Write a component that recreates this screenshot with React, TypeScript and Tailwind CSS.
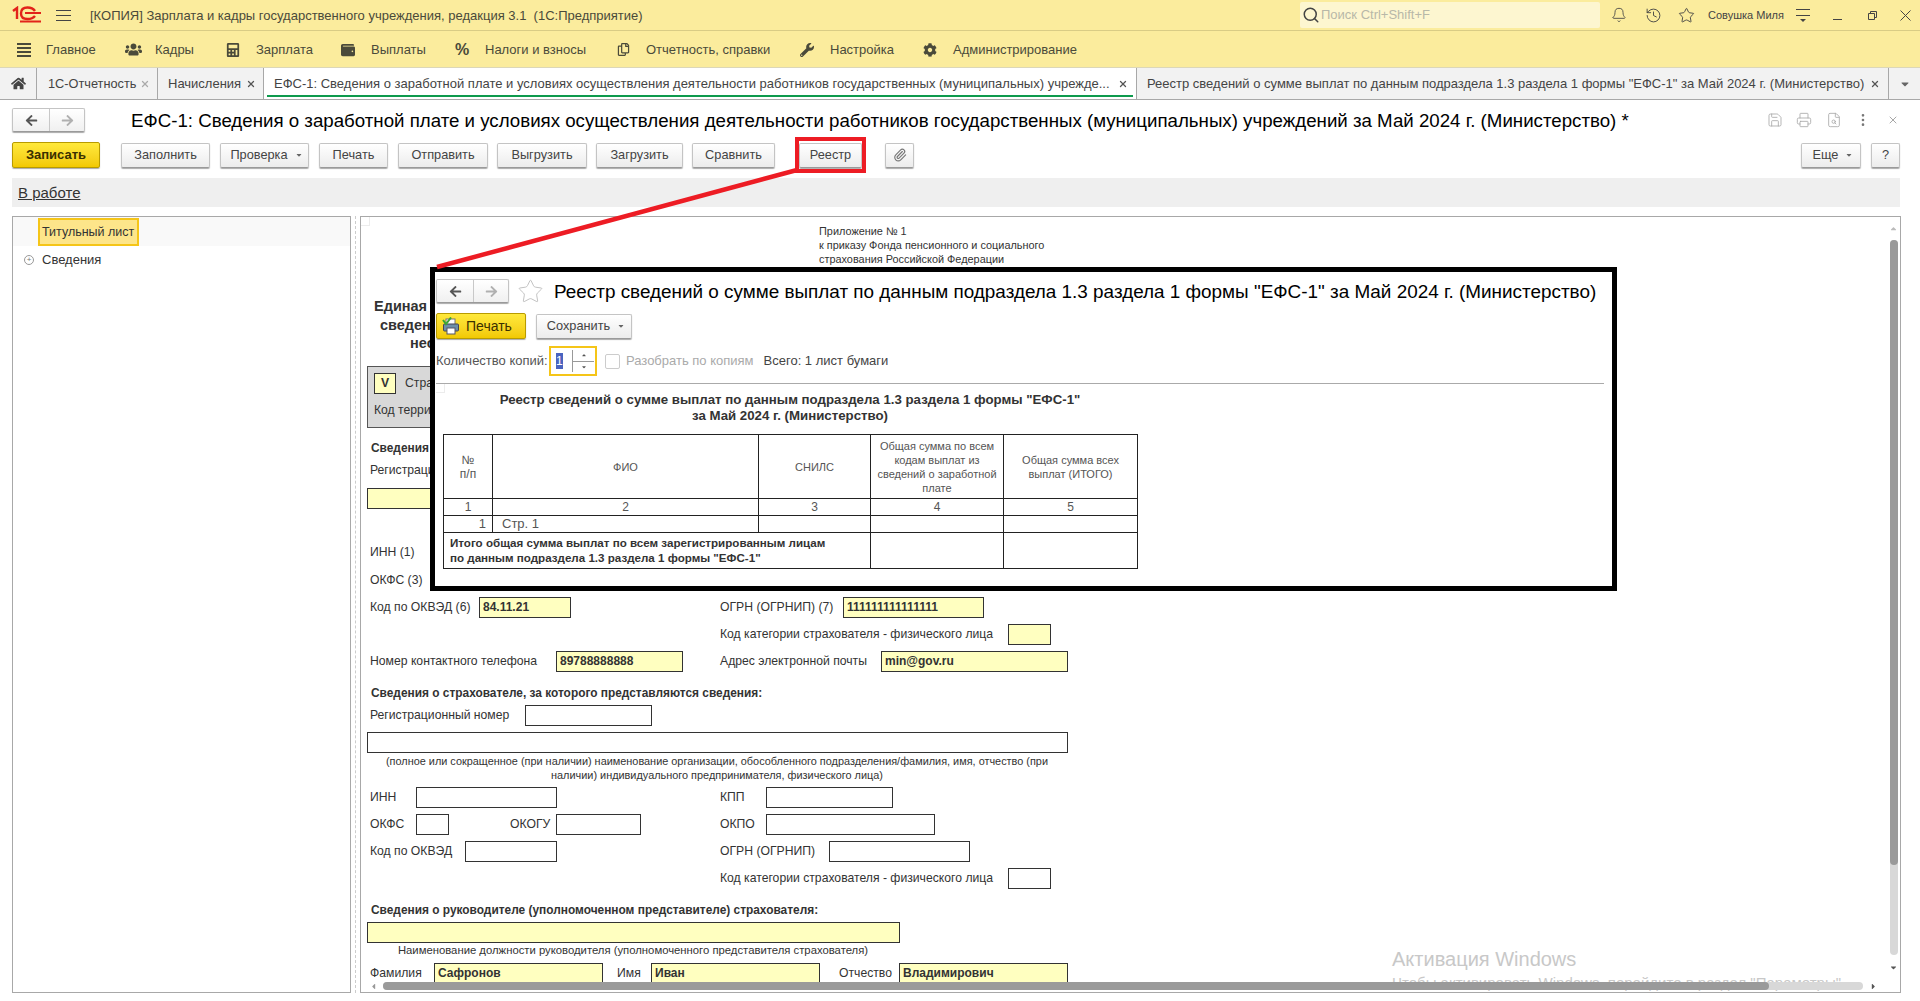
import { ReactNode } from 'react';
import { FaHome, FaUsers, FaCalculator, FaWrench, FaCog, FaArrowLeft, FaArrowRight, FaCaretDown, FaCaretUp, FaCaretLeft, FaCaretRight, FaWallet, FaRegCopy } from 'react-icons/fa';
import { Bell, History, Star, Search, Paperclip, X, Save, Printer, FileSearch, EllipsisVertical } from 'lucide-react';

// ============================================================================
// 1C - ЕФС-1 FORM WITH REGISTRY OVERLAY
// ============================================================================

function Logo() {
    return (
        <svg width="32" height="18" viewBox="0 0 32 18" fill="none" stroke="#e2231a" strokeWidth="2.4">
            <path d="M2 5 L6 2 V13" />
            <path d="M24 5 C22 2 19 1.5 16.5 1.5 C12 1.5 10 4 10 7.5 C10 11 12 13 16.5 13 C19 13 22 12.5 24 10" />
            <path d="M14 7 H30 M9 15.5 H30" strokeWidth="1.8" />
        </svg>
    );
}

function MenuItem({ icon, label, iconWidth }: { icon: ReactNode; label: string; iconWidth: string }) {
    return (
        <div className="flex items-center">
            <div className={`${iconWidth} flex items-center text-[#4a4a3a]`}>{icon}</div>
            <span>{label}</span>
        </div>
    );
}

function Btn({ children, width, caret }: { children: ReactNode; width: string; caret?: boolean }) {
    return (
        <div className={`${width} h-[25px] shrink-0 flex items-center justify-center rounded-[2px] border border-[#c4c4c4] border-b-[#9a9a9a] bg-gradient-to-b from-white to-[#ececec] shadow-[0_1px_1px_#aaa] text-[12.75px] text-[#444] ${caret ? 'gap-[7px] pl-[4px]' : ''}`}>
            {children}
            {caret && <FaCaretDown size={8} className="text-[#666]" />}
        </div>
    );
}

function YellowBtn({ children, width }: { children: ReactNode; width: string }) {
    return (
        <div className={`${width} h-[26px] shrink-0 flex items-center justify-center gap-[6px] rounded-[2px] border border-[#b89b00] bg-gradient-to-b from-[#ffe93a] to-[#f2c900] shadow-[0_1px_1px_#aaa] text-[#3a3000]`}>
            {children}
        </div>
    );
}

function BackForward() {
    return (
        <div className="w-[73px] h-[24px] shrink-0 flex rounded-[2px] border border-[#c4c4c4] border-b-[#9a9a9a] bg-gradient-to-b from-white to-[#f0f0f0] shadow-[0_1px_1px_#aaa]">
            <div className="w-[37px] flex items-center justify-center border-r border-[#c8c8c8] text-[#555]">
                <FaArrowLeft size={13} />
            </div>
            <div className="flex-1 flex items-center justify-center text-[#b0b0b0]">
                <FaArrowRight size={13} />
            </div>
        </div>
    );
}

function Corner() {
    return <div className="absolute left-0 top-0 w-[9px] h-[9px] border-r border-b border-[#ececec]" />;
}

function Input({ width, value, yellow }: { width: string; value?: string; yellow?: boolean }) {
    return (
        <div className={`${width} h-[21px] shrink-0 flex items-center pl-[3px] border border-[#333] font-bold text-[12px] ${yellow ? 'bg-[#ffffc0]' : 'bg-white'}`}>
            {value}
        </div>
    );
}

function Row({ children, className }: { children: ReactNode; className?: string }) {
    return <div className={`flex h-[21px] items-center ${className ?? ''}`}>{children}</div>;
}

function Heading({ children, className }: { children: ReactNode; className?: string }) {
    return <div className={`h-[16px] pl-[1px] font-bold text-[11.9px] leading-[16px] whitespace-nowrap ${className ?? ''}`}>{children}</div>;
}

function RegistryCell({ className, children }: { className: string; children?: ReactNode }) {
    return <div className={`flex items-center justify-center text-center ${className}`}>{children}</div>;
}

function RegistryOverlay() {
    return (
        <div className="absolute left-[430px] top-[267px] w-[1187px] h-[324px] border-[5px] border-black bg-white">
            {/* Header */}
            <div className="flex items-center h-[24px] mt-[7px] ml-[1px]">
                <BackForward />
                <Star size={27} strokeWidth={0.8} className="shrink-0 ml-[8px] text-[#bbb]" />
                <div className="ml-[10px] mt-[2px] text-[18.9px] text-black whitespace-nowrap">
                    Реестр сведений о сумме выплат по данным подраздела 1.3 раздела 1 формы "ЕФС-1" за Май 2024 г. (Министерство)
                </div>
            </div>

            {/* Actions */}
            <div className="flex items-center gap-[10px] mt-[10px] ml-[1px]">
                <YellowBtn width="w-[90px] !justify-start pl-[5px] text-[14px]">
                    <svg width="18" height="18" viewBox="0 0 18 18">
                        <rect x="4" y="2" width="9" height="6" fill="#fff" stroke="#777" />
                        <rect x="1.5" y="7" width="15" height="7" rx="1" fill="#6d8fa8" stroke="#445" />
                        <rect x="5" y="11" width="8" height="6" fill="#fff" stroke="#556" />
                        <path d="M1 3 L4 7 L9 0.5" fill="none" stroke="#3aa635" strokeWidth="2" />
                    </svg>
                    Печать
                </YellowBtn>
                <Btn width="w-[96px]" caret>Сохранить</Btn>
            </div>

            {/* Copies */}
            <div className="flex items-center mt-[7px] ml-[1px] h-[30px] text-[13px] text-[#555]">
                <span className="w-[113px] whitespace-nowrap">Количество копий:</span>
                <div className="w-[48px] h-[30px] flex items-center border-2 border-[#f5c518]">
                    <span className="ml-[5px] w-[7px] h-[16px] bg-[#4a64c0] text-white text-[12px] leading-[16px]">1</span>
                    <div className="ml-[9px] w-[22px] h-[22px] flex flex-col border-l border-[#999] text-[#555]">
                        <div className="flex-1 flex items-center justify-center border-b border-[#999]">
                            <FaCaretUp size={6} />
                        </div>
                        <div className="flex-1 flex items-center justify-center">
                            <FaCaretDown size={6} />
                        </div>
                    </div>
                </div>
                <div className="ml-[8px] w-[15px] h-[15px] rounded-[2px] border border-[#ccc]" />
                <span className="ml-[6px] text-[#aaa]">Разобрать по копиям</span>
                <span className="ml-[10px] text-[#444]">Всего: 1 лист бумаги</span>
            </div>

            {/* Document */}
            <div className="relative mt-[7px] ml-[1px] w-[1168px] h-[203px] border-t border-[#aaa] text-[#333]">
                <Corner />
                <div className="w-[708px] pt-[8px] text-center font-bold text-[13.25px] leading-[16px]">
                    Реестр сведений о сумме выплат по данным подраздела 1.3 раздела 1 формы "ЕФС-1"
                    <br />
                    за Май 2024 г. (Министерство)
                </div>
                <div className="ml-[7px] mt-[10px] w-[695px] border border-[#222] text-[11px] leading-[14px] text-[#555]">
                    <div className="flex h-[64px] border-b border-[#222]">
                        <RegistryCell className="w-[49px] border-r border-[#222] text-[12px]">№<br />п/п</RegistryCell>
                        <RegistryCell className="w-[266px] border-r border-[#222]">ФИО</RegistryCell>
                        <RegistryCell className="w-[112px] border-r border-[#222]">СНИЛС</RegistryCell>
                        <RegistryCell className="w-[133px] border-r border-[#222]">
                            <div>
                                Общая сумма по всем
                                <br />
                                кодам выплат из
                                <br />
                                сведений о заработной
                                <br />
                                плате
                            </div>
                        </RegistryCell>
                        <RegistryCell className="flex-1">
                            <div>
                                Общая сумма всех
                                <br />
                                выплат (ИТОГО)
                            </div>
                        </RegistryCell>
                    </div>
                    <div className="flex h-[17px] border-b border-[#222] text-[12px]">
                        <RegistryCell className="w-[49px] border-r border-[#222]">1</RegistryCell>
                        <RegistryCell className="w-[266px] border-r border-[#222]">2</RegistryCell>
                        <RegistryCell className="w-[112px] border-r border-[#222]">3</RegistryCell>
                        <RegistryCell className="w-[133px] border-r border-[#222]">4</RegistryCell>
                        <RegistryCell className="flex-1">5</RegistryCell>
                    </div>
                    <div className="flex h-[17px] border-b border-[#222] text-[13px]">
                        <RegistryCell className="w-[49px] border-r border-[#222] !justify-end pr-[6px]">1</RegistryCell>
                        <RegistryCell className="w-[266px] border-r border-[#222] !justify-start pl-[9px]">Стр. 1</RegistryCell>
                        <RegistryCell className="w-[112px] border-r border-[#222]" />
                        <RegistryCell className="w-[133px] border-r border-[#222]" />
                        <RegistryCell className="flex-1" />
                    </div>
                    <div className="flex h-[35px]">
                        <div className="w-[427px] border-r border-[#222] pl-[6px] pt-[2px] font-bold text-[11.6px] leading-[15px] text-[#333]">
                            Итого общая сумма выплат по всем зарегистрированным лицам
                            <br />
                            по данным подраздела 1.3 раздела 1 формы "ЕФС-1"
                        </div>
                        <div className="w-[133px] border-r border-[#222]" />
                        <div className="flex-1" />
                    </div>
                </div>
            </div>
        </div>
    );
}

function TaxForm() {
    return (
        <div className="relative flex-1 h-full overflow-hidden border border-[#a8a8a8] text-[12.2px] text-[#333]">
            <Corner />
            <div className="pl-[458px] pt-[7px] text-[10.9px] leading-[14px]">
                <div>Приложение № 1</div>
                <div>к приказу Фонда пенсионного и социального</div>
                <div>страхования Российской Федерации</div>
            </div>

            <div className="pl-[9px] pr-[10px]">
                <div className="mt-[31px] font-bold text-[14.5px] leading-[18.5px] whitespace-nowrap">
                    <div className="pl-[4px]">Единая форма сведений</div>
                    <div className="pl-[10px]">сведения о застрахованных лицах</div>
                    <div className="pl-[40px]">несчастных случаев</div>
                </div>

                <div className="ml-[-3px] mt-[13px] w-[700px] h-[62px] border border-[#555] bg-[#d8d8d8] pl-[6px] pt-[6px]">
                    <div className="flex items-center">
                        <div className="w-[22px] h-[21px] flex items-center justify-center border border-[#333] bg-[#ffffc0] font-bold">V</div>
                        <span className="ml-[9px]">Страхователь</span>
                    </div>
                    <div className="mt-[7px]">Код территориального органа</div>
                </div>

                <Heading className="mt-[12px]">Сведения о страхователе:</Heading>
                <Row className="mt-[4px]">Регистрационный номер</Row>
                <div className="ml-[-3px] mt-[7px]"><Input width="w-[701px]" yellow /></div>
                <div className="h-[28px] pt-[1px] text-center text-[10.9px] leading-[14px] ml-[-3px] w-[700px]">
                    (полное или сокращенное наименование организации)
                </div>

                <Row className="mt-[5px]">ИНН (1)</Row>
                <Row className="mt-[7px]">ОКФС (3)</Row>

                <Row className="mt-[6px]">
                    <div className="w-[350px] flex items-center">
                        <span className="w-[109px]">Код по ОКВЭД (6)</span>
                        <Input width="w-[92px]" value="84.11.21" yellow />
                    </div>
                    <span className="w-[123px]">ОГРН (ОГРНИП) (7)</span>
                    <Input width="w-[141px]" value="111111111111111" yellow />
                </Row>
                <Row className="mt-[6px]">
                    <div className="w-[350px]" />
                    <span className="w-[288px]">Код категории страхователя - физического лица</span>
                    <Input width="w-[43px]" yellow />
                </Row>
                <Row className="mt-[6px]">
                    <div className="w-[350px] flex items-center">
                        <span className="w-[186px]">Номер контактного телефона</span>
                        <Input width="w-[127px]" value="89788888888" yellow />
                    </div>
                    <span className="w-[161px]">Адрес электронной почты</span>
                    <Input width="w-[187px]" value="min@gov.ru" yellow />
                </Row>

                <Heading className="mt-[13px]">Сведения о страхователе, за которого представляются сведения:</Heading>
                <Row className="mt-[4px]">
                    <span className="w-[155px]">Регистрационный номер</span>
                    <Input width="w-[127px]" />
                </Row>
                <div className="ml-[-3px] mt-[6px]"><Input width="w-[701px]" /></div>
                <div className="h-[28px] pt-[1px] ml-[-3px] w-[700px] text-center text-[10.9px] leading-[14px] whitespace-nowrap">
                    (полное или сокращенное (при наличии) наименование организации, обособленного подразделения/фамилия, имя, отчество (при
                    <br />
                    наличии) индивидуального предпринимателя, физического лица)
                </div>

                <Row className="mt-[6px]">
                    <div className="w-[350px] flex items-center">
                        <span className="w-[46px]">ИНН</span>
                        <Input width="w-[141px]" />
                    </div>
                    <span className="w-[46px]">КПП</span>
                    <Input width="w-[127px]" />
                </Row>
                <Row className="mt-[6px]">
                    <div className="w-[350px] flex items-center">
                        <span className="w-[46px]">ОКФС</span>
                        <Input width="w-[33px]" />
                        <span className="ml-[61px] w-[46px]">ОКОГУ</span>
                        <Input width="w-[85px]" />
                    </div>
                    <span className="w-[46px]">ОКПО</span>
                    <Input width="w-[169px]" />
                </Row>
                <Row className="mt-[6px]">
                    <div className="w-[350px] flex items-center">
                        <span className="w-[95px]">Код по ОКВЭД</span>
                        <Input width="w-[92px]" />
                    </div>
                    <span className="w-[109px]">ОГРН (ОГРНИП)</span>
                    <Input width="w-[141px]" />
                </Row>
                <Row className="mt-[6px]">
                    <div className="w-[350px]" />
                    <span className="w-[288px]">Код категории страхователя - физического лица</span>
                    <Input width="w-[43px]" />
                </Row>

                <Heading className="mt-[13px]">Сведения о руководителе (уполномоченном представителе) страхователя:</Heading>
                <div className="ml-[-3px] mt-[4px]"><Input width="w-[533px]" yellow /></div>
                <div className="h-[14px] ml-[-3px] w-[532px] text-center text-[11.3px] leading-[14px] whitespace-nowrap">
                    Наименование должности руководителя (уполномоченного представителя страхователя)
                </div>
                <Row className="mt-[6px]">
                    <span className="w-[64px]">Фамилия</span>
                    <Input width="w-[169px]" value="Сафронов" yellow />
                    <span className="ml-[14px] w-[34px]">Имя</span>
                    <Input width="w-[169px]" value="Иван" yellow />
                    <span className="ml-[19px] w-[60px]">Отчество</span>
                    <Input width="w-[169px]" value="Владимирович" yellow />
                </Row>
            </div>

            {/* Windows watermark sits under the scrollbars */}
            <div className="absolute left-[1031px] top-[727px] text-[20px] text-[#c8c8c8] whitespace-nowrap">Активация Windows</div>
            <div className="absolute left-[1031px] top-[755px] text-[15px] text-[#c8c8c8] whitespace-nowrap">Чтобы активировать Windows, перейдите в раздел "Параметры".</div>

            {/* Scrollbars */}
            <div className="absolute right-0 top-0 w-[13px] flex flex-col items-center text-[#bbb]">
                <FaCaretUp size={9} className="mt-[7px]" />
                <div className="mt-[7px] w-[8px] h-[715px] rounded-[4px] bg-[#d8d8d8]">
                    <div className="h-[625px] rounded-[4px] bg-[#9a9a9a]" />
                </div>
                <FaCaretDown size={9} className="mt-[8px] text-[#555]" />
            </div>
            <div className="absolute left-0 right-0 bottom-0 h-[12px] flex items-center text-[#999]">
                <FaCaretLeft size={9} className="ml-[8px]" />
                <div className="ml-[5px] h-[8px] flex-1 rounded-[4px] bg-[#d8d8d8]">
                    <div className="h-[8px] w-[1386px] rounded-[4px] bg-[#9a9a9a]" />
                </div>
                <FaCaretRight size={9} className="ml-[6px] mr-[22px] text-[#555]" />
            </div>
        </div>
    );
}

export default function App() {
    return (
        <div className="relative w-[1920px] h-[1001px] overflow-hidden bg-white flex flex-col text-[13px] text-[#333] [font-family:'Liberation_Sans',Arial,sans-serif]">
            {/* Title bar */}
            <div className="h-[31px] shrink-0 flex items-center bg-[#fbec9d] border-b border-[#d9cc85]">
                <div className="ml-[11px]"><Logo /></div>
                <svg className="ml-[13px]" width="15" height="13" viewBox="0 0 15 13" stroke="#444" strokeWidth="1">
                    <path d="M0 1.5 H15 M0 6.5 H15 M0 11.5 H15" />
                </svg>
                <span className="ml-[19px] pt-[1px] text-[#4a4a3a] whitespace-pre">[КОПИЯ] Зарплата и кадры государственного учреждения, редакция 3.1  (1С:Предприятие)</span>
                <div className="ml-auto w-[300px] h-[26px] flex items-center gap-[1px] pl-[2px] rounded-[2px] bg-[#fdf6d0] text-[#b8b8a8]">
                    <Search size={18} className="text-[#444]" />
                    Поиск Ctrl+Shift+F
                </div>
                <Bell size={16} strokeWidth={1.3} className="ml-[11px] text-[#444]" />
                <History size={17} strokeWidth={1.3} className="ml-[18px] text-[#444]" />
                <Star size={17} strokeWidth={1.3} className="ml-[16px] text-[#444]" />
                <span className="ml-[13px] w-[74px] text-[11px] text-[#444] whitespace-nowrap">Совушка Миля</span>
                <svg className="ml-[14px]" width="14" height="15" viewBox="0 0 14 15" stroke="#444" strokeWidth="1">
                    <path d="M0 1.5 H14 M0 7.5 H14" />
                    <path d="M4 11 H10 L7 14 Z" fill="#444" stroke="none" />
                </svg>
                <svg className="ml-[23px]" width="9" height="12" viewBox="0 0 9 12" stroke="#444" strokeWidth="1">
                    <path d="M0 10.5 H9" />
                </svg>
                <svg className="ml-[26px]" width="9" height="9" viewBox="0 0 9 9" fill="none" stroke="#444" strokeWidth="1">
                    <path d="M0.5 2.5 H6.5 V8.5 H0.5 Z M2.5 2.5 V0.5 H8.5 V6.5 H6.5" />
                </svg>
                <svg className="ml-[23px] mr-[9px]" width="11" height="11" viewBox="0 0 11 11" stroke="#444" strokeWidth="1">
                    <path d="M0.5 0.5 L10.5 10.5 M10.5 0.5 L0.5 10.5" />
                </svg>
            </div>

            {/* Sections */}
            <div className="h-[37px] shrink-0 flex items-center pl-[17px] pt-[1px] bg-[#fbec9d] border-b border-[#dcd7b8] text-[#4a4a3a]">
                <div className="w-[108px]">
                    <MenuItem
                        iconWidth="w-[29px]"
                        icon={
                            <svg width="14" height="14" viewBox="0 0 14 14" stroke="#4a4a3a" strokeWidth="2">
                                <path d="M0 1 H14 M0 5 H14 M0 9 H14 M0 13 H14" />
                            </svg>
                        }
                        label="Главное"
                    />
                </div>
                <div className="w-[101px]"><MenuItem iconWidth="w-[30px]" icon={<FaUsers size={17} />} label="Кадры" /></div>
                <div className="w-[115px]"><MenuItem iconWidth="w-[30px]" icon={<FaCalculator size={14} />} label="Зарплата" /></div>
                <div className="w-[114px]"><MenuItem iconWidth="w-[30px]" icon={<FaWallet size={14} />} label="Выплаты" /></div>
                <div className="w-[162px]"><MenuItem iconWidth="w-[30px]" icon={<span className="font-bold text-[16px] leading-none">%</span>} label="Налоги и взносы" /></div>
                <div className="w-[183px]"><MenuItem iconWidth="w-[29px]" icon={<FaRegCopy size={13} />} label="Отчетность, справки" /></div>
                <div className="w-[123px]"><MenuItem iconWidth="w-[30px]" icon={<FaWrench size={14} />} label="Настройка" /></div>
                <MenuItem iconWidth="w-[30px]" icon={<FaCog size={14} />} label="Администрирование" />
            </div>

            {/* Open tabs */}
            <div className="h-[32px] shrink-0 flex bg-[#f2f2f2] border-b border-[#a8a8a8] text-[#444]">
                <div className="w-[37px] flex items-center justify-center border-r border-[#a8a8a8]">
                    <FaHome size={15} />
                </div>
                <div className="w-[121px] flex items-center pl-[11px] border-r border-[#a8a8a8] text-[12.75px]">
                    1С-Отчетность
                    <X size={10} strokeWidth={3} className="ml-auto mr-[7px] text-[#aaa]" />
                </div>
                <div className="w-[106px] flex items-center pl-[10px] border-r border-[#a8a8a8]">
                    Начисления
                    <X size={10} strokeWidth={3} className="ml-auto mr-[7px] text-[#555]" />
                </div>
                <div className="relative w-[873px] flex items-center pl-[10px] bg-white border-r border-[#a8a8a8]">
                    <span className="whitespace-nowrap">ЕФС-1: Сведения о заработной плате и условиях осуществления деятельности работников государственных (муниципальных) учрежде...</span>
                    <X size={10} strokeWidth={3} className="ml-auto mr-[8px] text-[#555]" />
                    <div className="absolute left-[3px] right-[3px] bottom-[2px] h-[2px] bg-[#0e9a4d]" />
                </div>
                <div className="w-[752px] flex items-center pl-[10px] border-r border-[#a8a8a8]">
                    <span className="whitespace-nowrap">Реестр сведений о сумме выплат по данным подраздела 1.3 раздела 1 формы "ЕФС-1" за Май 2024 г. (Министерство)</span>
                    <X size={10} strokeWidth={3} className="ml-auto mr-[8px] text-[#555]" />
                </div>
                <div className="flex-1 flex items-center justify-center text-[#666]">
                    <FaCaretDown size={12} />
                </div>
            </div>

            {/* Form header */}
            <div className="flex items-center h-[24px] mt-[8px] pl-[12px] pr-[21px]">
                <BackForward />
                <div className="ml-[46px] mt-[2px] text-[18.7px] text-black whitespace-nowrap">
                    ЕФС-1: Сведения о заработной плате и условиях осуществления деятельности работников государственных (муниципальных) учреждений за Май 2024 г. (Министерство) *
                </div>
                <div className="ml-auto flex items-center text-[#aaa]">
                    <Save size={16} strokeWidth={1.3} />
                    <Printer size={16} strokeWidth={1.3} className="ml-[13px]" />
                    <FileSearch size={16} strokeWidth={1.3} className="ml-[14px]" />
                    <EllipsisVertical size={16} className="ml-[13px] text-[#777]" />
                    <X size={12} strokeWidth={1.3} className="ml-[16px] text-[#777]" />
                </div>
            </div>

            {/* Toolbar */}
            <div className="flex items-center h-[26px] mt-[10px] pl-[12px] pr-[20px]">
                <YellowBtn width="w-[88px] font-bold text-[13px]">Записать</YellowBtn>
                <div className="ml-[21px] flex items-center gap-[10px]">
                    <Btn width="w-[89px]">Заполнить</Btn>
                    <Btn width="w-[89px]" caret>Проверка</Btn>
                    <Btn width="w-[69px]">Печать</Btn>
                    <Btn width="w-[90px]">Отправить</Btn>
                    <div className="ml-[-1px]"><Btn width="w-[90px]">Выгрузить</Btn></div>
                    <div className="ml-[-1px]"><Btn width="w-[87px]">Загрузить</Btn></div>
                    <div className="ml-[-1px]"><Btn width="w-[83px]">Сравнить</Btn></div>
                    <div className="ml-[14px]"><Btn width="w-[63px]">Реестр</Btn></div>
                    <div className="ml-[13px]">
                        <Btn width="w-[29px]"><Paperclip size={14} className="text-[#777]" /></Btn>
                    </div>
                </div>
                <div className="ml-auto flex items-center gap-[10px]">
                    <Btn width="w-[60px]" caret>Еще</Btn>
                    <Btn width="w-[29px]">?</Btn>
                </div>
            </div>

            {/* Status */}
            <div className="h-[29px] mt-[10px] ml-[12px] mr-[20px] flex items-center pl-[6px] pt-[1px] bg-[#efefef] text-[15px] underline">
                В работе
            </div>

            {/* Body */}
            <div className="flex h-[777px] mt-[9px] ml-[12px] mr-[19px]">
                <div className="w-[339px] border border-[#a8a8a8]">
                    <div className="h-[29px] pl-[25px] pt-[1px] bg-[#f9f9f9]">
                        <div className="w-[101px] h-[28px] flex items-center pl-[2px] border-2 border-[#f5c518] bg-[#fde58a] text-[12.5px] whitespace-nowrap">Титульный лист</div>
                    </div>
                    <div className="h-[28px] flex items-center pl-[11px]">
                        <div className="w-[10px] h-[10px] flex items-center justify-center rounded-full border border-[#999] text-[8px] leading-none text-[#777]">+</div>
                        <span className="ml-[8px]">Сведения</span>
                    </div>
                </div>
                <div className="w-[9px] relative right-[4px] border-r border-dashed border-[#ccc]" />
                <TaxForm />
            </div>

            {/* Overlays */}
            <RegistryOverlay />

            <div className="absolute left-[795px] top-[137px] w-[71px] h-[36px] border-[4px] border-[#ed1c24]" />
            <svg className="absolute left-0 top-0" width="1920" height="1001" fill="none">
                <path d="M797 170 L437 267" stroke="#ed1c24" strokeWidth="4.5" />
            </svg>
        </div>
    );
}
